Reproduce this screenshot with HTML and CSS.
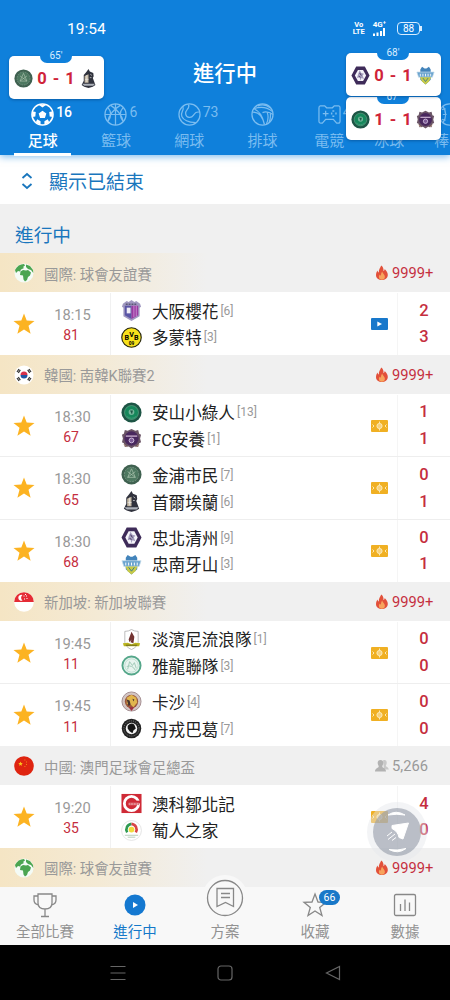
FILE: index.html
```
<!DOCTYPE html>
<html lang="zh-TW">
<head>
    <meta charset="UTF-8">
    <meta name="viewport" content="width=device-width, initial-scale=1.0">
    <title>進行中</title>
    <link rel="stylesheet" href="styles.css">
</head>
<body>
    <!-- Shared icons -->
    <svg class="sprite" xmlns="http://www.w3.org/2000/svg">
        <symbol id="star" viewBox="0 0 22 22"><path d="M11 .5l2.700 7 7.800.4-6 4.800 2.100 8L11 16.400l-6.600 4.300 2.100-8-6-4.800 7.800-.4z" fill="#fcb322"/></symbol>
        <symbol id="fire" viewBox="0 0 14 16">
            <path d="M6.200.5c1.800 1.300 2.700 3.400 2.200 5.400.9-.3 1.200-1.100 1.300-2 2 1.700 3.200 4 3.100 6.200-.2 3.200-2.700 5-5.900 5S1 13.200 1 10c0-1.900.7-3.400 1.500-4.600.2 1.100.6 1.700 1.300 2C3.600 4.700 5.200 3 6.200.5z" fill="#e2503a"/>
            <path d="M7.200 6.500c.2 1.800 2.700 2.900 2.700 5.300 0 1.900-1.300 2.900-3 2.900s-3-1.100-3-2.800c0-1 .5-1.700 1.100-2.300.2.700.5 1 1 1.200-.1-1.600.3-3 1.200-4.300z" fill="#f7a35c"/>
        </symbol>
        <symbol id="people" viewBox="0 0 14 14"><path d="M8 1.500c2.500-1.200 4 .4 3.700 2.500-.1 1.500-.8 2-.8 3 0 .8 2.600 1 2.900 3.500H9z" fill="#c9c9c9"/><path d="M5.500 1C7.600 1 8.500 2.500 8.300 4.300c-.1 1.500-1 2.100-1 3.200C7.300 8.900 11 9 11 12.500H0C0 9 3.700 8.900 3.700 7.500c0-1.100-.9-1.700-1-3.200C2.500 2.500 3.400 1 5.500 1z" fill="#b2b2b2"/></symbol>
        <symbol id="video" viewBox="0 0 17 12"><rect width="17" height="12" rx="1" fill="#1878cb"/><path d="M6.300 3.500l4.700 2.500-4.700 2.500z" fill="#fff"/></symbol>
        <symbol id="pitch" viewBox="0 0 17 12"><rect width="17" height="12" rx="1" fill="#f0b023"/><path d="M8.500 1.500v9M1.500 4.500l1.500 1.500-1.500 1.500M15.500 4.500L14 6l1.500 1.500" stroke="#fde9b5" fill="none"/><circle cx="8.500" cy="6" r="2.600" stroke="#fde9b5" fill="#f8d27a"/></symbol>

        <!-- Flags -->
        <symbol id="globe" viewBox="0 0 20 20"><circle cx="10" cy="10" r="9.500" fill="#f4fbf6"/><path d="M1 7C3 3 6 1 10 1l1 1.500-2 1.500 1 1-3 1.500-1 2-2-.5-2 2zM6.500 8.500L9 7l3 .5 2-.5 3 2.500-1 3-2 1.500-1 3-2 1.500-1.500-2-.5-4-3-.5zM12 1.500l4 1.500 3 4 .3 3-2.300-3-3-1-2-2z" fill="#4ba551"/></symbol>
        <symbol id="korea" viewBox="0 0 20 20"><circle cx="10" cy="10" r="9.500" fill="#fff"/><path d="M6.500 10a3.500 3.500 0 017 0z" fill="#d6314a"/><path d="M6.500 10a3.500 3.500 0 007 0z" fill="#1e56a5"/><path d="M3 7l2-3M4.300 7.800l2-3M15 4l2 3M13.700 4.800l2 3M3 13l2 3M4.300 12.200l2 3M15 16l2-3M13.700 15.200l2-3" stroke="#333" stroke-width="1.200"/></symbol>
        <symbol id="singapore" viewBox="0 0 20 20"><circle cx="10" cy="10" r="9.800" fill="#fff"/><path d="M.2 10a9.800 9.800 0 0119.600 0z" fill="#e52b35"/><path d="M8.500 3a3 3 0 100 5.500 3.400 3.400 0 010-5.500z" fill="#fff"/><path d="M9.500 4h1M12 4h1M10 7h1M12.500 6.500h1M11 2.500h1" stroke="#fff"/></symbol>
        <symbol id="china" viewBox="0 0 20 20"><circle cx="10" cy="10" r="9.800" fill="#df2410"/><path d="M6.500 5.500l.7 1.500 1.600.1-1.200 1.100.4 1.600-1.500-.9-1.400.9.4-1.600-1.200-1.100 1.600-.1z" fill="#f9c51b"/><path d="M10.500 4h.8M12 6h.8M12 8.500h.8M10.500 10.500h.8" stroke="#f9c51b" stroke-width=".8"/></symbol>

        <!-- Club crests -->
        <symbol id="cerezo" viewBox="0 0 22 22"><path d="M2 4l4-3 2 1 3-2 3 2 2-1 4 3 1 3-1.500 1V17l-8.500 5L2.500 17V8L1 7z" fill="#a098c0"/><path d="M4 6h7v14l-7-4z" fill="#5a55a5"/><path d="M11 6h7v10l-7 4z" fill="#9b3aa0"/><path d="M6 8h4v6H6z" fill="#efecf7"/><path d="M13.500 6v12M16 6v11" stroke="#c68ad0"/><path d="M5 4.500h12" stroke="#5c5875" stroke-width="1.500" stroke-dasharray="2 1"/></symbol>
        <symbol id="ansan" viewBox="0 0 22 22"><circle cx="11" cy="11" r="10.500" fill="#1d5545"/><circle cx="11" cy="11" r="7.300" fill="#16875b" stroke="#6eae91" stroke-width=".6"/><circle cx="11" cy="10.500" r="3" fill="#74b79b"/><path d="M9.500 9h3l-1 4z" fill="#1d5545"/><path d="M6 15q5 4 10 0" stroke="#3d9a76" fill="none"/></symbol>
        <symbol id="anyang" viewBox="0 0 22 22"><path d="M4 2l3 1 4-2 4 2 3-1 1 4 2 1-1 4 1 4-2 1-1 4-4-.500-3 2-3-2-4 .500-1-4-2-1 1-4-1-4 2-1z" fill="#6b5566"/><circle cx="11" cy="11" r="7.500" fill="#49285e"/><path d="M5 8.500h12" stroke="#c1a6c7" stroke-width="1.500"/><circle cx="11" cy="13" r="2.500" fill="#7d5b96" stroke="#d1bfe0"/><path d="M3 17l3 3M19 17l-3 3" stroke="#b79275"/></symbol>
        <symbol id="gimpo" viewBox="0 0 22 22"><circle cx="11" cy="11" r="10.500" fill="#3f6150"/><circle cx="11" cy="11" r="7.500" fill="#4d7860" stroke="#91aa99" stroke-width=".6" stroke-dasharray="2 1"/><path d="M11 5l4 9H7zM7 8l8 6M15 8l-8 6" stroke="#a6bea9" fill="none" stroke-width=".8"/></symbol>
        <symbol id="eland" viewBox="0 0 22 22"><path d="M11 0l1.500 3 4 1.500.5 4-1 2 1.500 4 1.500 4-3 2-5 1.500-5-1.500-3-2 1.500-3 1-2V7l3-3.500z" fill="#30323d"/><path d="M6.500 8l4.500-2v10H6.500z" fill="#c6baa5"/><path d="M3.500 17h15l-2 2.300H6z" fill="#abb0b8"/><path d="M13 6l2 1.500M12.500 10h2M7 12h4M9 7v8" stroke="#eee" stroke-width=".7"/></symbol>
        <symbol id="chungbuk" viewBox="0 0 22 22"><path d="M6 .500h10L21.500 11 16 21.500H6L.5 11z" fill="#3e2b59"/><path d="M8 4.500h6l3.500 6.500-3.500 6.500H8L4.500 11z" fill="#f5f4fa"/><path d="M10 5l2 3 3 1-1.500 2 1.500 4-3-1-1 3-1-4-3 1 1-4z" fill="#a49dbd"/><path d="M10 8l2 3M9 12l2 1" stroke="#3e2b59"/></symbol>
        <symbol id="asan" viewBox="0 0 22 22"><path d="M5 4l2-3 3 2h2l3-2 2 3v12l-6 5.500L5 16z" fill="#4384bb"/><path d="M1 7h20l-2 6H3z" fill="#6ba4cf" stroke="#c5dcea" stroke-width=".8"/><path d="M4.500 13h13l-2.500 5-4 3.500L7 18z" fill="#c8cb47"/><path d="M5 9v3M8 9v3M11 9v3M14 9v3M17 9v3" stroke="#fff"/><path d="M8 14l3 4 3-4" stroke="#39788c" fill="none"/></symbol>
        <symbol id="tampines" viewBox="0 0 22 22"><path d="M4 2.500Q8 2.500 11 .500q3 2 7 2V14q-1 5-7 7.500Q5 19 4 14z" fill="#fff" stroke="#aaa" stroke-width=".8"/><path d="M11 3l3 5-1 7-3-1 1-3-2 3-1-3z" fill="#733432"/><path d="M2 15l5-.5 4 1.500 4-1.500 5 .5-1 3H3z" fill="#bbb51e"/><path d="M5 17h12" stroke="#66631f"/></symbol>
        <symbol id="geylang" viewBox="0 0 22 22"><circle cx="11" cy="11" r="9.500" fill="#e8f4ef" stroke="#55a78a" stroke-width="2"/><circle cx="11" cy="11" r="7" fill="none" stroke="#a6d2bf" stroke-width=".6"/><path d="M7 15l2-8 3 4 2-3 2 6M6 12q6-2 9 4" stroke="#9fc9b7" fill="none"/></symbol>
        <symbol id="qasar" viewBox="0 0 22 22"><circle cx="11" cy="11" r="10" fill="#d3c6c3" stroke="#a38d90"/><circle cx="11" cy="11" r="7" fill="#9b563a"/><path d="M6 7l5-3 5 3 1 5-4 5-4-4-3 1z" fill="#e1b64d"/><path d="M6 9l3 1 1 4-2 2zM12 8l2 1-1 2z" fill="#47342e"/><path d="M8 17l3 4 3-4z" fill="#9f3040"/></symbol>
        <symbol id="tanjong" viewBox="0 0 22 22"><circle cx="11" cy="11" r="10.200" fill="#222"/><circle cx="11" cy="11" r="8" fill="none" stroke="#9a9a9a" stroke-width=".8" stroke-dasharray="1 1.300"/><circle cx="11" cy="11" r="6" fill="#f3f3f3"/><path d="M7 8q4-4 7-1l1.500 4-2.500 2-1 3-3-2-2-3z" fill="#151515"/></symbol>
        <symbol id="cpk" viewBox="0 0 22 22"><rect x=".500" y="1" width="21" height="20" fill="#cf2a36"/><circle cx="11" cy="11" r="7.500" fill="none" stroke="#fff" stroke-width="3"/><path d="M13 8h7v3h-7z" fill="#cf2a36"/><path d="M8 11.500h11" stroke="#e9a4a8" stroke-width="2.500"/><path d="M9 11.500h10" stroke="#cf2a36" stroke-dasharray="2 1"/></symbol>
        <symbol id="casa" viewBox="0 0 22 22"><circle cx="11" cy="11" r="10.400" fill="#fff" stroke="#ddd" stroke-width=".8"/><path d="M6.500 13a6 6 0 014.500-9" stroke="#2f9a53" stroke-width="2.800" fill="none"/><path d="M11 4a6 6 0 014.500 9" stroke="#d94545" stroke-width="2.800" fill="none"/><circle cx="11" cy="10" r="3" fill="#f1db3b"/><path d="M4 16h14M7 18h8" stroke="#a2bea5" stroke-width=".8"/></symbol>
    </svg>

    <div class="phone">
        <header class="header">
            <div class="status-bar">
                <span class="clock">19:54</span>
                <span class="status-icons">
                    <span class="volte">Vo<br>LTE</span>
                    <span class="network">
                        <span>4G⁺</span>
                        <svg width="12" height="8" viewBox="0 0 12 8" fill="#fff"><path d="M0 5.500h2V8H0zM3.500 4.500h2V8h-2zM7 3h2v5H7zM10 0h2v8h-2z"/></svg>
                    </span>
                    <span class="battery">88</span>
                </span>
            </div>
            <h1 class="title">進行中</h1>
            <nav class="tabs">
                <a class="tab active">
                    <span class="tab-icon">
                        <svg viewBox="0 0 24 24"><circle cx="12" cy="12" r="11" fill="none" stroke="#fff" stroke-width="1.600"/><path d="M12 8l4 3-1.500 4.700h-5L8 11zM8 1.800h8l-4 3zM1.200 8.500L5 9.500 4.500 14l-3.200.5zM22.800 8.500L19 9.500l.5 4.500 3.200.5zM5 20l1.500-3 3.500 2v4zM19 20l-1.500-3-3.500 2v4z" fill="#fff"/></svg>
                        <span class="count">16</span>
                    </span>
                    足球
                </a>
                <a class="tab">
                    <span class="tab-icon">
                        <svg class="line" viewBox="0 0 24 24"><circle cx="12" cy="12" r="11"/><path d="M12 1v22M1 12h22M4 4.500q6 7 0 15M20 4.500q-6 7 0 15M7 2.500q11 7 13 17M17 2.500Q6 9 4 19.500"/></svg>
                        <span class="count">6</span>
                    </span>
                    籃球
                </a>
                <a class="tab">
                    <span class="tab-icon">
                        <svg class="line" viewBox="0 0 24 24"><circle cx="12" cy="12" r="11"/><path d="M11 1.500C13 6 7 7 8 11.500S14 16 16 13s3-4 6.500-3.500M5 3.500C7 8 2 9.500 4 14s7 6 14.500 6.500"/></svg>
                        <span class="count">73</span>
                    </span>
                    網球
                </a>
                <a class="tab">
                    <span class="tab-icon">
                        <svg class="line" viewBox="0 0 24 24"><circle cx="12" cy="12" r="11"/><path d="M3 6Q14 2 22.500 9M7 3Q14 0 20 5M1.500 9.500Q11 9 14 22.500M12 10q5-2 11 2M3 6q8 3 11 16M17 10q2 6-1 12M20 10q1 5-1 10"/></svg>
                    </span>
                    排球
                </a>
                <a class="tab narrow">
                    <span class="tab-icon">
                        <svg class="line" viewBox="0 0 24 24"><path d="M2.500 3H7l2 2h6l2-2h4.500q1.500 0 1.500 2v14q0 2-2 2h-1.500L16 17H8l-3.500 4H3q-2 0-2-2V5q0-2 1.500-2zM8 8v6M5 11h6"/><path d="M16 7.500v1.500M16 13v1.500M13.500 11H15M18 11h1.500" stroke-width="2"/></svg>
                        <span class="count">4</span>
                    </span>
                    電競
                </a>
                <a class="tab narrow">
                    <span class="tab-icon"></span>
                    冰球
                </a>
                <a class="tab narrow">
                    <span class="tab-icon">
                        <svg class="line" viewBox="0 0 24 24"><circle cx="12" cy="12" r="11"/><path d="M5 3q6 9 0 18M4 7l4-1M5 12h4M4 17l4 1"/></svg>
                    </span>
                    棒球
                </a>
            </nav>
        </header>

        <main class="content">
            <div class="show-ended">
                <svg width="12" height="18" viewBox="0 0 12 18" fill="none" stroke="#1976bd" stroke-width="1.800"><path d="M1.500 6L6 2l4.500 4M1.500 12L6 16l4.500-4"/></svg>
                <span>顯示已結束</span>
            </div>
            <h2 class="section-title">進行中</h2>

            <div class="league hot">
                <svg class="flag"><use href="#globe"/></svg>
                <span class="league-name">國際: 球會友誼賽</span>
                <span class="viewers"><svg><use href="#fire"/></svg>9999+</span>
            </div>
            <div class="match">
                <svg class="star"><use href="#star"/></svg>
                <div class="time">18:15<b>81</b></div>
                <div class="teams">
                    <div class="team"><svg><use href="#cerezo"/></svg>大阪櫻花<small>[6]</small></div>
                    <div class="team"><svg viewBox="0 0 22 22"><circle cx="11" cy="11" r="10.200" fill="#f8e11b" stroke="#26260e" stroke-width="1.200"/><text x="11" y="10" class="crest-text">V</text><text x="6" y="13.500" class="crest-text">B</text><text x="16" y="13.500" class="crest-text">B</text><text x="11" y="18.500" class="crest-text crest-year">09</text></svg>多蒙特<small>[3]</small></div>
                </div>
                <svg class="media"><use href="#video"/></svg>
                <div class="score"><b>2</b><b>3</b></div>
            </div>

            <div class="league hot">
                <svg class="flag"><use href="#korea"/></svg>
                <span class="league-name">韓國: 南韓K聯賽2</span>
                <span class="viewers"><svg><use href="#fire"/></svg>9999+</span>
            </div>
            <div class="match">
                <svg class="star"><use href="#star"/></svg>
                <div class="time">18:30<b>67</b></div>
                <div class="teams">
                    <div class="team"><svg><use href="#ansan"/></svg>安山小綠人<small>[13]</small></div>
                    <div class="team"><svg><use href="#anyang"/></svg>FC安養<small>[1]</small></div>
                </div>
                <svg class="media"><use href="#pitch"/></svg>
                <div class="score"><b>1</b><b>1</b></div>
            </div>
            <div class="match">
                <svg class="star"><use href="#star"/></svg>
                <div class="time">18:30<b>65</b></div>
                <div class="teams">
                    <div class="team"><svg><use href="#gimpo"/></svg>金浦市民<small>[7]</small></div>
                    <div class="team"><svg><use href="#eland"/></svg>首爾埃蘭<small>[6]</small></div>
                </div>
                <svg class="media"><use href="#pitch"/></svg>
                <div class="score"><b>0</b><b>1</b></div>
            </div>
            <div class="match">
                <svg class="star"><use href="#star"/></svg>
                <div class="time">18:30<b>68</b></div>
                <div class="teams">
                    <div class="team"><svg><use href="#chungbuk"/></svg>忠北清州<small>[9]</small></div>
                    <div class="team"><svg><use href="#asan"/></svg>忠南牙山<small>[3]</small></div>
                </div>
                <svg class="media"><use href="#pitch"/></svg>
                <div class="score"><b>0</b><b>1</b></div>
            </div>

            <div class="league hot">
                <svg class="flag"><use href="#singapore"/></svg>
                <span class="league-name">新加坡: 新加坡聯賽</span>
                <span class="viewers"><svg><use href="#fire"/></svg>9999+</span>
            </div>
            <div class="match">
                <svg class="star"><use href="#star"/></svg>
                <div class="time">19:45<b>11</b></div>
                <div class="teams">
                    <div class="team"><svg><use href="#tampines"/></svg>淡濱尼流浪隊<small>[1]</small></div>
                    <div class="team"><svg><use href="#geylang"/></svg>雅龍聯隊<small>[3]</small></div>
                </div>
                <svg class="media"><use href="#pitch"/></svg>
                <div class="score"><b>0</b><b>0</b></div>
            </div>
            <div class="match">
                <svg class="star"><use href="#star"/></svg>
                <div class="time">19:45<b>11</b></div>
                <div class="teams">
                    <div class="team"><svg><use href="#qasar"/></svg>卡沙<small>[4]</small></div>
                    <div class="team"><svg><use href="#tanjong"/></svg>丹戎巴葛<small>[7]</small></div>
                </div>
                <svg class="media"><use href="#pitch"/></svg>
                <div class="score"><b>0</b><b>0</b></div>
            </div>

            <div class="league">
                <svg class="flag"><use href="#china"/></svg>
                <span class="league-name">中國: 澳門足球會足總盃</span>
                <span class="viewers"><svg><use href="#people"/></svg>5,266</span>
            </div>
            <div class="match">
                <svg class="star"><use href="#star"/></svg>
                <div class="time">19:20<b>35</b></div>
                <div class="teams">
                    <div class="team"><svg><use href="#cpk"/></svg>澳科鄒北記</div>
                    <div class="team"><svg><use href="#casa"/></svg>葡人之家</div>
                </div>
                <svg class="media"><use href="#pitch"/></svg>
                <div class="score"><b>4</b><b>0</b></div>
            </div>

            <div class="league hot">
                <svg class="flag"><use href="#globe"/></svg>
                <span class="league-name">國際: 球會友誼賽</span>
                <span class="viewers"><svg><use href="#fire"/></svg>9999+</span>
            </div>
        </main>

        <nav class="bottom-nav">
            <a class="nav-item">
                <svg class="nav-icon" viewBox="0 0 26 26"><path d="M6 2h14v9q0 6-7 6t-7-6zM6 4H2v4q0 4 4.500 5M20 4h4v4q0 4-4.500 5M13 17v7M9 24.500h8"/></svg>
                全部比賽
            </a>
            <a class="nav-item active">
                <svg class="nav-icon" viewBox="0 0 26 26"><circle cx="13" cy="13" r="10.500" class="play-disc"/><path d="M11 10l5 3-5 3z" class="play-mark"/></svg>
                進行中
            </a>
            <a class="nav-item plan">
                <span class="plan-button"><svg viewBox="0 0 38 38" width="38" height="38"><circle cx="19" cy="19" r="17.500"/><path d="M11 9.500h16.500v18l-8-4-8.500 4zM15 14.500h9M15 18.500h9"/></svg></span>
                方案
            </a>
            <a class="nav-item">
                <svg class="nav-icon" viewBox="0 0 26 26"><path d="M13 2l3 8 8 .3-6.300 5.200 2.300 8L13 19l-7 4.500 2.300-8L2 10.300l8-.3z"/></svg>
                <span class="nav-badge">66</span>
                收藏
            </a>
            <a class="nav-item">
                <svg class="nav-icon" viewBox="0 0 26 26"><rect x="2.500" y="2.500" width="21" height="21" rx="1.500"/><path d="M8.500 12v7M13 7.500V19M17.500 10.500V19"/></svg>
                數據
            </a>
        </nav>

        <div class="system-bar">
            <svg width="16" height="16" viewBox="0 0 16 16"><path d="M.5 1.500h15M.5 8h15M.5 14.500h15"/></svg>
            <svg width="16" height="16" viewBox="0 0 16 16"><rect x="1" y="1" width="14" height="14" rx="3"/></svg>
            <svg width="16" height="16" viewBox="0 0 16 16"><path d="M14.500 1.500v13L1.500 8z"/></svg>
        </div>

        <!-- Floating live scores -->
        <div class="float-card card-seoul">
            <span class="minute">65'</span>
            <svg><use href="#gimpo"/></svg><b>0 - 1</b><svg><use href="#eland"/></svg>
        </div>
        <div class="float-card card-anyang">
            <span class="minute">67'</span>
            <svg><use href="#ansan"/></svg><b>1 - 1</b><svg><use href="#anyang"/></svg>
        </div>
        <div class="float-card card-asan">
            <span class="minute">68'</span>
            <svg><use href="#chungbuk"/></svg><b>0 - 1</b><svg><use href="#asan"/></svg>
        </div>

        <div class="float-button">
            <svg viewBox="0 0 60 60"><circle cx="30" cy="30" r="30" fill="#e4e6ea" opacity=".45"/><circle cx="30" cy="30" r="24" fill="#969daa" opacity=".62"/><path d="M21 13q8-5.500 17 0-8-1.500-17 0zM22 47.500q8 1.500 17-1-8 6-17 1zM25 23.500L41.500 21 36 37l-4-1.500q-1-6-7-9zM20 34l5-4M21 37.500l7-5.500M25 38.500l4-3" fill="#fff" stroke="#fff"/></svg>
        </div>
    </div>
</body>
</html>
```
FILE: styles.css
```
:root {
    --primary-color: #0f80db;
    --link-color: #1976bd;
    --live-color: #c52e3e;
    --muted-color: #999999;
    --panel-color: #f0f0f0;
}
* {
    box-sizing: border-box;
    margin: 0;
    padding: 0;
}
body {
    font-family: Roboto, 'Noto Sans CJK TC', sans-serif;
    background: #000;
}
.sprite {
    position: absolute;
    width: 0;
    height: 0;
}
.crest-text {
    font-size: 7.5px;
    font-weight: bold;
    text-anchor: middle;
}
.crest-year {
    font-size: 5px;
}
.phone {
    position: relative;
    width: 450px;
    height: 1000px;
    overflow: hidden;
    display: flex;
    flex-direction: column;
    background: #fff;
}

/* Header */
.header {
    height: 155px;
    flex: none;
    background: var(--primary-color);
    color: #fff;
    box-shadow: 0 2px 7px rgba(15, 128, 219, 0.5);
    z-index: 1;
}
.status-bar {
    display: flex;
    justify-content: space-between;
    align-items: center;
    height: 57px;
    padding: 0 28px 0 67px;
}
.clock {
    font-size: 15.5px;
}
.status-icons {
    display: flex;
    align-items: center;
    gap: 8px;
}
.volte {
    font-size: 7.5px;
    line-height: 6.5px;
    font-weight: bold;
    text-align: center;
}
.network {
    display: flex;
    flex-direction: column;
    align-items: center;
    font-size: 8px;
    line-height: 7px;
    font-weight: bold;
}
.battery {
    position: relative;
    width: 23px;
    height: 13px;
    border: 1.5px solid #d9edff;
    border-radius: 4px;
    font-size: 10px;
    line-height: 11px;
    text-align: center;
    margin: 0 2px 0 3px;
}
.battery::after {
    content: "";
    position: absolute;
    right: -3px;
    top: 3px;
    width: 2px;
    height: 5px;
    background: #d9edff;
}
.title {
    height: 44px;
    line-height: 33px;
    font-size: 21.3px;
    font-weight: 500;
    text-align: center;
}
.tabs {
    display: flex;
    width: 480px;
    height: 55px;
    padding-left: 6px;
}
.tab {
    flex: 0 0 73.3px;
    display: flex;
    flex-direction: column;
    align-items: center;
    color: #7abcf0;
    font-size: 15px;
    line-height: 30px;
}
.tab.narrow {
    flex-basis: 60px;
}
.tab.active {
    color: #fff;
    font-weight: 500;
}
.tab.active::after {
    content: "";
    width: 57px;
    height: 3px;
    margin-top: -3px;
    background: #fff;
}
.tab-icon {
    position: relative;
    width: 23px;
    height: 25px;
    padding-top: 2px;
}
.tab-icon svg {
    display: block;
    width: 23px;
    height: 23px;
}
.line {
    fill: none;
    stroke: #7abcf0;
    stroke-width: 1.3;
}
.count {
    position: absolute;
    left: 25px;
    top: -3px;
    font-size: 14px;
    font-weight: normal;
    line-height: 28px;
}
.active .count {
    font-weight: 500;
}

/* List */
.content {
    height: 732px;
    flex: none;
    overflow: hidden;
    background: var(--panel-color);
}
.show-ended {
    display: flex;
    align-items: center;
    gap: 16px;
    height: 49px;
    padding: 2px 0 0 21px;
    background: #fff;
    color: var(--link-color);
    font-size: 19px;
}
.section-title {
    height: 49px;
    padding-left: 15px;
    line-height: 64px;
    font-size: 18.7px;
    font-weight: normal;
    color: var(--link-color);
}
.league {
    display: flex;
    align-items: center;
    height: 39px;
    padding: 1px 15px 0 14px;
    background: var(--panel-color);
    color: var(--muted-color);
    font-size: 14.4px;
}
.league.hot {
    background: linear-gradient(90deg, #f5e5c4 0%, #f4ead5 22%, #f0f0f0 46%);
}
.flag {
    width: 20px;
    height: 20px;
    margin-right: 10px;
}
.viewers {
    display: flex;
    align-items: center;
    width: 60px;
    margin-left: auto;
    font-size: 14.7px;
}
.viewers svg {
    width: 14px;
    height: 16px;
    margin-right: 3px;
}
.hot .viewers {
    color: var(--live-color);
}
.match {
    display: grid;
    grid-template-columns: 48px 63px 1fr 26px 53px;
    align-items: center;
    height: 62.7px;
    padding-top: 1px;
    background: #fff;
}
.match + .match {
    border-top: 1px solid #eeeeee;
    padding-top: 0;
}
.star {
    width: 22px;
    height: 22px;
    margin-left: 13px;
}
.time {
    display: flex;
    flex-direction: column;
    align-items: center;
    justify-content: center;
    height: 100%;
    padding: 3px 13px 0 0;
    border-right: 1px solid #f1f1f1;
    color: var(--muted-color);
    font-size: 14.7px;
    line-height: 20.5px;
}
.time b {
    margin-left: -3px;
    color: var(--live-color);
    font-size: 14px;
    font-weight: normal;
}
.teams {
    padding-left: 10px;
}
.team {
    display: flex;
    align-items: center;
    height: 26.7px;
    color: #222;
    font-size: 16.6px;
}
.team svg {
    width: 21px;
    height: 21px;
    margin-right: 10px;
}
.team small {
    margin-left: 2px;
    color: var(--muted-color);
    font-size: 12px;
}
.media {
    width: 17px;
    height: 12px;
}
.score {
    display: flex;
    flex-direction: column;
    justify-content: center;
    height: 100%;
    padding-top: 1px;
    border-left: 1px solid #f5f5f5;
    color: var(--live-color);
    font-size: 16.5px;
    line-height: 26.7px;
    text-align: center;
}
.score b {
    font-weight: 500;
}

/* Bottom navigation */
.bottom-nav {
    position: relative;
    display: grid;
    grid-template-columns: repeat(5, 1fr);
    height: 58px;
    flex: none;
    background: #f8f8f8;
}
.nav-item {
    position: relative;
    display: flex;
    flex-direction: column;
    align-items: center;
    padding-top: 5px;
    color: #929292;
    font-size: 14.5px;
    line-height: 29px;
}
.nav-item.active {
    color: #1478c9;
}
.nav-icon {
    width: 26px;
    height: 26px;
}
.nav-icon,
.plan-button svg {
    fill: none;
    stroke: #888;
    stroke-width: 1.3;
}
.nav-icon .play-disc {
    fill: #1478d0;
    stroke: none;
}
.nav-icon .play-mark {
    fill: #fff;
    stroke: none;
}
.plan {
    padding-top: 0;
}
.plan-button {
    width: 46px;
    height: 46px;
    margin: -12px 0 -3px;
    padding: 4px;
    border-radius: 50%;
    background: #f8f8f8;
}
.plan-button svg {
    display: block;
}
.nav-badge {
    position: absolute;
    top: 3px;
    left: 49px;
    width: 21px;
    height: 15px;
    border-radius: 8px;
    background: #1878c8;
    color: #fff;
    font-size: 10.5px;
    line-height: 15px;
    text-align: center;
}
.system-bar {
    display: flex;
    justify-content: center;
    align-items: center;
    gap: 91.5px;
    height: 55px;
    background: #000;
}
.system-bar svg {
    fill: none;
    stroke: #666;
    stroke-width: 1.2;
}

/* Floating items */
.float-card {
    position: absolute;
    z-index: 2;
    display: flex;
    align-items: center;
    justify-content: space-between;
    width: 95px;
    height: 43px;
    padding: 1px 6px 0 5px;
    border-radius: 5px;
    background: #fff;
    box-shadow: 0 1px 3px rgba(0, 40, 90, 0.4);
    color: #cf2339;
}
.float-card svg {
    width: 19px;
    height: 19px;
}
.float-card b {
    font-size: 16.5px;
    font-weight: bold;
    word-spacing: 2px;
}
.minute {
    position: absolute;
    top: -7px;
    left: 31px;
    width: 32px;
    height: 14px;
    border-radius: 0 0 7px 7px;
    background: var(--primary-color);
    color: #d9edff;
    font-size: 10px;
    line-height: 14px;
    text-align: center;
}
.card-seoul {
    left: 9px;
    top: 56px;
}
.card-asan {
    left: 346px;
    top: 53px;
}
.card-anyang {
    left: 346px;
    top: 97px;
}
.float-button {
    position: absolute;
    z-index: 2;
    left: 367px;
    top: 802px;
    width: 60px;
    height: 60px;
}
```
